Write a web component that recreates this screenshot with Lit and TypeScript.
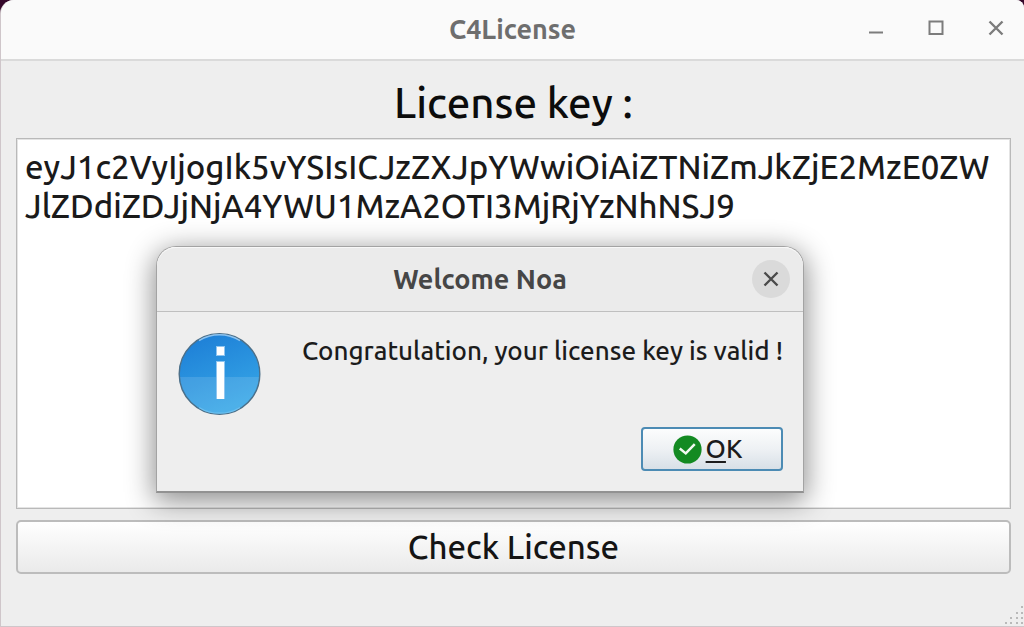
import { LitElement, html, css } from "lit";
import { customElement, property, state } from "lit/decorators.js";

const LICENSE_KEY =
  "eyJ1c2VyIjogIk5vYSIsICJzZXJpYWwiOiAiZTNiZmJkZjE2MzE0ZWJlZDdiZDJjNjA4YWU1MzA2OTI3MjRjYzNhNSJ9";

@customElement("license-dialog")
export class LicenseDialog extends LitElement {
  @property() heading = "";
  @property() message = "";

  static styles = css`
    :host {
      display: block;
      box-sizing: border-box;
      border: 1px solid #a3a3a3;
      border-bottom: 2px solid #929292;
      border-radius: 20px 20px 0 0;
      background: #eeeeee;
      box-shadow: 0 6px 28px 2px rgba(0, 0, 0, 0.45);
    }
    .bar {
      display: grid;
      grid-template-columns: 1fr auto 1fr;
      align-items: center;
      height: 64px;
      padding: 0 13px;
      border-bottom: 1px solid #bfbfbf;
      border-radius: 19px 19px 0 0;
      background: #ebebeb;
      box-shadow: inset 0 1px 0 #f8f8f8;
    }
    .title {
      grid-column: 2;
      margin: 0;
      font-size: 27px;
      line-height: 32px;
      font-weight: 700;
      color: #464646;
    }
    .close {
      justify-self: end;
      display: grid;
      place-items: center;
      width: 38px;
      height: 38px;
      padding: 0;
      border: 0;
      border-radius: 50%;
      background: #dadada;
    }
    .body {
      display: flex;
      justify-content: space-between;
      padding: 20px 20px 0 21px;
    }
    .info {
      display: block;
      flex: none;
    }
    .message {
      margin: 0;
      font-size: 26px;
      line-height: 38px;
      white-space: nowrap;
      color: #1c1c1c;
    }
    .actions {
      display: flex;
      justify-content: flex-end;
      padding: 11px 20px 20px;
    }
    .ok {
      display: flex;
      align-items: center;
      justify-content: center;
      gap: 4px;
      box-sizing: border-box;
      width: 142px;
      height: 44px;
      padding: 0 9px 0 0;
      border: 2px solid #4c8bb4;
      border-radius: 4px;
      background: linear-gradient(#fcfdfd, #eef1f4 50%, #d8e0e7);
      font: inherit;
      font-size: 26px;
      line-height: 32px;
      color: #1c1c1c;
    }
    .mnemonic {
      text-decoration: underline;
      text-decoration-thickness: 2px;
      text-underline-offset: 3px;
    }
  `;

  private dismiss() {
    this.dispatchEvent(new CustomEvent("dismiss"));
  }

  render() {
    return html`
      <header class="bar">
        <h2 class="title">${this.heading}</h2>
        <button class="close" aria-label="Close" @click=${this.dismiss}>
          <svg width="16" height="16" viewBox="0 0 16 16" aria-hidden="true">
            <path d="M1.5 1.5 L14.5 14.5 M14.5 1.5 L1.5 14.5" stroke="#4a4a4a" stroke-width="2.4" fill="none" />
          </svg>
        </button>
      </header>
      <div class="body">
        <svg class="info" width="84" height="84" viewBox="0 0 84 84" aria-hidden="true">
          <defs>
            <linearGradient id="disc" x1="0" y1="0" x2="0.4" y2="1">
              <stop offset="0" stop-color="#1b7bd5" />
              <stop offset="1" stop-color="#35a5e6" />
            </linearGradient>
            <clipPath id="lower"><rect x="0" y="45" width="84" height="39" /></clipPath>
          </defs>
          <circle cx="41.5" cy="42" r="40.3" fill="url(#disc)" stroke="#4c6f88" stroke-width="1.4" />
          <circle cx="41.5" cy="42" r="39.5" fill="#ffffff" fill-opacity="0.12" clip-path="url(#lower)" />
          <path d="M21 8.6 A39 39 0 0 1 62 8.6" fill="none" stroke="#8dc3ef" stroke-width="1.4" />
          <path d="M21 75.4 A39 39 0 0 0 62 75.4" fill="none" stroke="#6cc0f0" stroke-width="1.2" />
          <rect x="38" y="14" width="9" height="10" fill="#8fc5f0" />
          <rect x="38" y="29" width="9" height="38" fill="#8fc5f0" />
          <rect x="39" y="15" width="7" height="8" fill="#ffffff" />
          <rect x="39" y="30" width="7" height="37" fill="#ffffff" />
        </svg>
        <p class="message">${this.message}</p>
      </div>
      <div class="actions">
        <button class="ok" @click=${this.dismiss}>
          <svg width="29" height="29" viewBox="0 0 30 30" aria-hidden="true">
            <circle cx="15" cy="15" r="14.6" fill="#138a22" />
            <path d="M7 14 L13.2 19 L22.5 9.5" fill="none" stroke="#f2faf2" stroke-width="2.6" />
          </svg>
          <span><span class="mnemonic">O</span>K</span>
        </button>
      </div>
    `;
  }
}

@customElement("app-root")
export class AppRoot extends LitElement {
  @state() private key = LICENSE_KEY;
  @state() private dialogOpen = true;

  static styles = css`
    :host {
      display: block;
      min-height: 100vh;
      background: #35082a;
      font-family: Ubuntu, "Noto Sans", "Open Sans", sans-serif;
      font-weight: 500;
    }
    .window {
      position: relative;
      display: flex;
      flex-direction: column;
      box-sizing: border-box;
      min-height: 100vh;
      border: solid #cfc6ca;
      border-width: 0 0 1px 1px;
      border-radius: 14px 8px 0 0;
      background: #eeeeee;
      overflow: hidden;
    }
    .titlebar {
      display: grid;
      grid-template-columns: 1fr auto 1fr;
      align-items: center;
      box-sizing: border-box;
      height: 61px;
      padding-bottom: 2px;
      border-bottom: 2px solid #dadada;
      background: #fafafa;
    }
    .title {
      grid-column: 2;
      margin: 0;
      font-size: 27px;
      line-height: 32px;
      font-weight: 700;
      color: #6e6e6e;
    }
    .controls {
      display: flex;
      justify-content: flex-end;
      gap: 20px;
      padding: 0 8px 2px 0;
    }
    .control {
      display: grid;
      place-items: center;
      width: 40px;
      height: 40px;
      padding: 0;
      border: 0;
      background: none;
    }
    .content {
      flex: 1;
      display: flex;
      flex-direction: column;
      padding: 13px 13px 0 15px;
    }
    .label {
      align-self: center;
      margin-bottom: 6px;
      font-size: 42px;
      line-height: 58px;
      color: #0c0c0c;
    }
    .key {
      display: block;
      flex: 1;
      box-sizing: border-box;
      width: 100%;
      margin: 0;
      padding: 8px 17px 8px 8px;
      border: 1px solid #b9b9b9;
      outline: 1px solid #e4e4e4;
      outline-offset: -2px;
      border-radius: 0;
      background: #ffffff;
      font: inherit;
      font-size: 33px;
      line-height: 39px;
      word-break: break-all;
      resize: none;
      overflow: hidden;
      color: #1a1a1a;
    }
    .check {
      height: 54px;
      margin-top: 11px;
      padding: 0;
      border: 2px solid #bcbcbc;
      border-radius: 5px;
      background: linear-gradient(#ffffff, #eaeaea);
      font: inherit;
      font-size: 33px;
      line-height: 48px;
      color: #141414;
    }
    .status {
      display: flex;
      justify-content: flex-end;
      align-items: flex-end;
      height: 52px;
    }
    .grip {
      display: block;
    }
    .popup {
      position: absolute;
      top: 246px;
      left: 155px;
      width: 648px;
    }
  `;

  private onInput(e: Event) {
    this.key = (e.target as HTMLTextAreaElement).value;
  }

  render() {
    return html`
      <main class="window">
        <header class="titlebar">
          <h1 class="title">C4License</h1>
          <div class="controls">
            <button class="control" aria-label="Minimize">
              <svg width="16" height="16" viewBox="0 0 16 16"><path d="M1 12.5 H15" stroke="#7c7c7c" stroke-width="2" /></svg>
            </button>
            <button class="control" aria-label="Maximize">
              <svg width="16" height="16" viewBox="0 0 16 16"><rect x="1.5" y="1.5" width="13" height="12.5" fill="none" stroke="#7c7c7c" stroke-width="2" /></svg>
            </button>
            <button class="control" aria-label="Close window">
              <svg width="16" height="16" viewBox="0 0 16 16"><path d="M1.5 1.5 L14.5 14.5 M14.5 1.5 L1.5 14.5" stroke="#7c7c7c" stroke-width="2.4" /></svg>
            </button>
          </div>
        </header>
        <section class="content">
          <label class="label" for="key">License key :</label>
          <textarea class="key" id="key" spellcheck="false" .value=${this.key} @input=${this.onInput}></textarea>
          <button class="check" @click=${() => (this.dialogOpen = true)}>Check License</button>
        </section>
        <footer class="status">
          <svg class="grip" width="20" height="20" viewBox="0 0 20 20" aria-hidden="true">
            <g fill="#b9b9b9">
              <rect x="1" y="16" width="2" height="2" /><rect x="6" y="16" width="2" height="2" /><rect x="12" y="16" width="2" height="2" /><rect x="17" y="16" width="2" height="2" />
              <rect x="6" y="11" width="2" height="2" /><rect x="12" y="11" width="2" height="2" /><rect x="17" y="11" width="2" height="2" />
              <rect x="12" y="6" width="2" height="2" /><rect x="17" y="6" width="2" height="2" />
              <rect x="17" y="0" width="2" height="2" />
            </g>
          </svg>
        </footer>
        ${this.dialogOpen
          ? html`<license-dialog
              class="popup"
              role="dialog"
              aria-label="Welcome Noa"
              heading="Welcome Noa"
              message="Congratulation, your license key is valid !"
              @dismiss=${() => (this.dialogOpen = false)}
            ></license-dialog>`
          : ""}
      </main>
    `;
  }
}
